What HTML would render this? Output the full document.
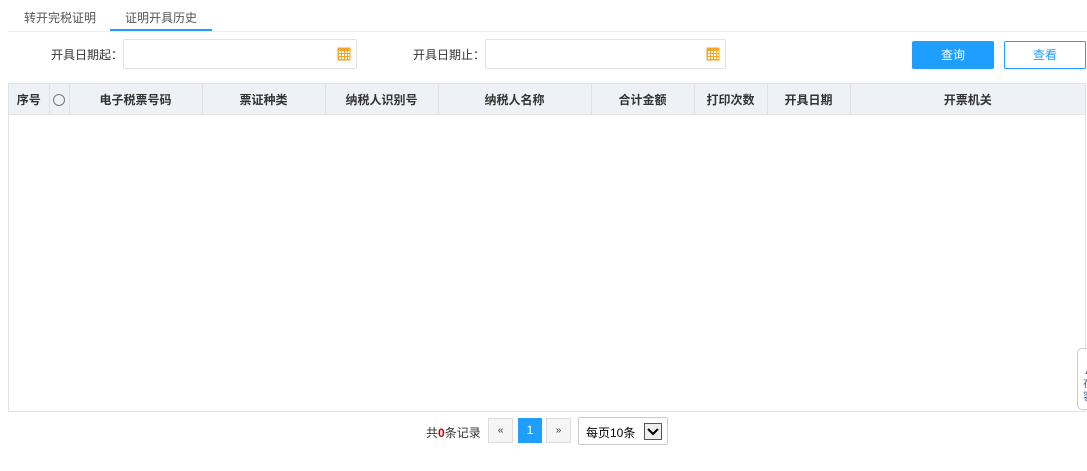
<!DOCTYPE html><html><head><meta charset="utf-8"><style>
*{box-sizing:border-box;margin:0;padding:0}
body{width:1087px;height:471px;background:#fff;font-family:"Liberation Sans","Noto Sans CJK SC",sans-serif;font-size:12px;color:#333;position:relative;overflow:hidden}
.a{position:absolute}
.inp{border:1px solid #e2e2e2;border-radius:2px;height:30px;top:39px}
th{font-weight:bold;font-size:12px;color:#333;background:#eef1f5;border-right:1px solid #e2e2e2;height:31px;text-align:center;padding:0}
table{border-collapse:collapse;table-layout:fixed}
.pg{border:1px solid #ddd;background:#f5f5f5;height:25px;top:418px;text-align:center;line-height:23px;font-size:10px;color:#333}
</style></head><body>
<div class="a" style="left:24px;top:9px;color:#555">转开完税证明</div>
<div class="a" style="left:125px;top:9px;color:#555">证明开具历史</div>
<div class="a" style="left:110px;top:29px;width:102px;height:2px;background:#1e9fff"></div>
<div class="a" style="left:8px;top:31px;width:1079px;height:1px;background:#eee"></div>
<div class="a" style="left:51px;top:46px">开具日期起<span style="font-family:'Noto Sans CJK SC'">：</span></div>
<svg class="a" style="left:337px;top:47px" width="14" height="14" viewBox="0 0 14 14"><rect x="0.5" y="0.5" width="13" height="13" fill="#f5a623"/><g fill="#fff"><rect x="2" y="4" width="2" height="2"/><rect x="5" y="4" width="2" height="2"/><rect x="8" y="4" width="2" height="2"/><rect x="11" y="4" width="1.5" height="2"/><rect x="2" y="7" width="2" height="2"/><rect x="5" y="7" width="2" height="2"/><rect x="8" y="7" width="2" height="2"/><rect x="11" y="7" width="1.5" height="2"/><rect x="2" y="10" width="2" height="2"/><rect x="5" y="10" width="2" height="2"/><rect x="8" y="10" width="2" height="2"/><rect x="11" y="10" width="1.5" height="2"/></g></svg>
<div class="a inp" style="left:123px;width:234px;background:transparent"></div>
<div class="a" style="left:413px;top:46px">开具日期止<span style="font-family:'Noto Sans CJK SC'">：</span></div>
<div class="a inp" style="left:485px;width:241px"></div>
<svg class="a" style="left:706px;top:47px" width="14" height="14" viewBox="0 0 14 14"><rect x="0.5" y="0.5" width="13" height="13" fill="#f5a623"/><g fill="#fff"><rect x="2" y="4" width="2" height="2"/><rect x="5" y="4" width="2" height="2"/><rect x="8" y="4" width="2" height="2"/><rect x="11" y="4" width="1.5" height="2"/><rect x="2" y="7" width="2" height="2"/><rect x="5" y="7" width="2" height="2"/><rect x="8" y="7" width="2" height="2"/><rect x="11" y="7" width="1.5" height="2"/><rect x="2" y="10" width="2" height="2"/><rect x="5" y="10" width="2" height="2"/><rect x="8" y="10" width="2" height="2"/><rect x="11" y="10" width="1.5" height="2"/></g></svg>
<div class="a" style="left:912px;top:41px;width:82px;height:28px;background:#1e9fff;border-radius:2px;color:#fff;text-align:center;line-height:28px">查询</div>
<div class="a" style="left:1004px;top:41px;width:82px;height:28px;border:1px solid #1e9fff;border-radius:2px;color:#1e9fff;text-align:center;line-height:26px">查看</div>
<div class="a" style="left:8px;top:83px;width:1078px;height:329px;border:1px solid #e2e2e2">
<table style="width:1076px"><tr>
<th style="width:40px">序号</th>
<th style="width:20px"><span style="display:inline-block;width:12px;height:12px;border:1px solid #777;border-radius:50%;vertical-align:middle"></span></th>
<th style="width:133px">电子税票号码</th>
<th style="width:123px">票证种类</th>
<th style="width:113px">纳税人识别号</th>
<th style="width:153px">纳税人名称</th>
<th style="width:103px">合计金额</th>
<th style="width:73px">打印次数</th>
<th style="width:83px">开具日期</th>
<th style="border-right:none">开票机关</th>
</tr></table>
<div style="position:absolute;left:0;top:30px;width:100%;height:1px;background:#e2e2e2"></div>
</div>
<div class="a" style="left:1077px;top:348px;width:14px;height:62px;border:1px solid #ccc;border-radius:5px 0 0 5px;background:#fff;font-size:11px;color:#3a6ea5;line-height:13px;padding:16px 0 0 5px">▲<br>在<br>客</div>
<div class="a" style="left:426px;top:424px">共<b style="color:#c00">0</b>条记录</div>
<div class="a pg" style="left:488px;width:25px">«</div>
<div class="a" style="left:518px;top:418px;width:24px;height:25px;background:#1e9fff;color:#fff;text-align:center;line-height:25px">1</div>
<div class="a pg" style="left:546px;width:25px">»</div>
<div class="a" style="left:578px;top:417px;width:90px;height:28px;border:1px solid #ccc;border-radius:2px;padding:6px 0 0 7px;color:#000">每页10条
<svg style="position:absolute;right:5px;top:5px" width="18" height="17" viewBox="0 0 18 17"><rect x="0.5" y="0.5" width="17" height="16" fill="#eee" stroke="#555"/><path d="M4 6 L9 11 L14 6" fill="none" stroke="#000" stroke-width="2"/></svg></div>
</body></html>
